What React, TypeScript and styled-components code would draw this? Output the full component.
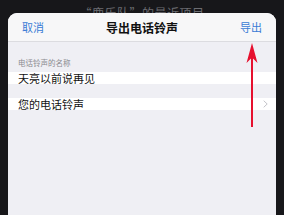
import React from 'react';
import styled, { createGlobalStyle } from 'styled-components';

const GlobalStyle = createGlobalStyle`
  html, body {
    margin: 0;
    padding: 0;
    background: #17171a;
    font-family: "Noto Sans CJK SC", "Noto Sans", sans-serif;
  }
  #root {
    width: 284px;
    height: 215px;
    overflow: hidden;
  }
`;

const Screen = styled.div`
  width: 284px;
  height: 215px;
  display: flex;
  flex-direction: column;
  background: #17171a;
  overflow: hidden;
`;

// title of the page underneath, mostly hidden by the sheet
const BehindTitle = styled.div`
  height: 13px;
  overflow: hidden;
  padding-top: 6px;
  box-sizing: border-box;
  text-align: center;
  font-size: 12px;
  line-height: 14px;
  color: #6d6d72;
  letter-spacing: 0.5px;
`;

const Sheet = styled.div`
  position: relative;
  flex: 1;
  margin: 0 8px;
  background: #efeff4;
  border-radius: 9px 9px 0 0;
  overflow: hidden;
`;

const NavBar = styled.div`
  height: 28px;
  display: grid;
  grid-template-columns: 1fr auto 1fr;
  align-items: center;
  padding: 0 14px;
  background: #f7f7f8;
  border-bottom: 1px solid #dcdce0;
`;

const NavButton = styled.span<{ $align: 'left' | 'right' }>`
  font-size: 11px;
  color: #3a7bd5;
  justify-self: ${(p) => (p.$align === 'left' ? 'start' : 'end')};
`;

const NavTitle = styled.span`
  font-size: 12px;
  font-weight: 600;
  color: #111;
`;

const SectionLabel = styled.div`
  padding: 16px 10px 0;
  height: 14px;
  font-size: 7.5px;
  line-height: 10px;
  color: #8a8a8f;
`;

const Row = styled.div<{ $gap?: number }>`
  height: 12px;
  margin-top: ${(p) => p.$gap ?? 0}px;
  display: flex;
  align-items: center;
  justify-content: space-between;
  padding: 0 10px;
  background: #fff;
  font-size: 11px;
  color: #111;
`;

const Chevron = styled.svg`
  display: block;
  margin-right: -2px;
`;

const Arrow = styled.svg`
  position: absolute;
  left: 237px;
  top: 29px;
`;

export default function App() {
  return (
    <Screen>
      <GlobalStyle />
      <BehindTitle>“鹿乐队”的最近项目</BehindTitle>
      <Sheet>
        <NavBar>
          <NavButton $align="left">取消</NavButton>
          <NavTitle>导出电话铃声</NavTitle>
          <NavButton $align="right">导出</NavButton>
        </NavBar>
        <SectionLabel>电话铃声的名称</SectionLabel>
        <Row>天亮以前说再见</Row>
        <Row $gap={14}>
          <span>您的电话铃声</span>
          <Chevron width="5" height="8" viewBox="0 0 5 8">
            <path d="M0.7 0.7 L4.2 4 L0.7 7.3" fill="none" stroke="#c4c4c9" strokeWidth="1" />
          </Chevron>
        </Row>
        <Arrow width="14" height="86" viewBox="0 0 14 86">
          <path d="M7 1 L12.5 21 L8 16.5 L8 85 L6 85 L6 16.5 L1.5 21 Z" fill="#e6102e" />
        </Arrow>
      </Sheet>
    </Screen>
  );
}
